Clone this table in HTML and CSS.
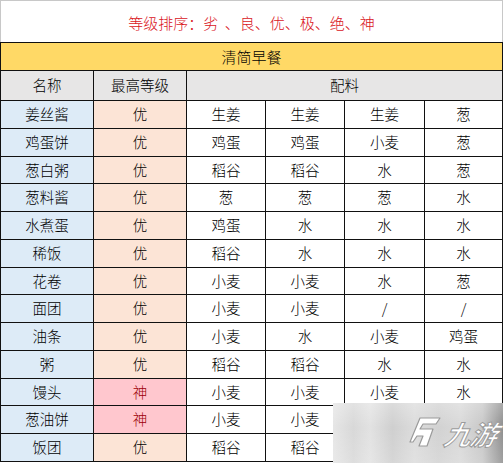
FILE: index.html
```html
<!DOCTYPE html>
<html lang="zh">
<head>
<meta charset="utf-8">
<title>清简早餐</title>
<link rel="stylesheet" href="styles.css">
</head>
<body>
<div class="page">
  <div class="legend">等级排序：劣&nbsp; 、良、优、极、绝、神</div>
  <div class="sheet">
    <div class="cell title span-all">清简早餐</div>
    <div class="cell head">名称</div>
    <div class="cell head">最高等级</div>
    <div class="cell head span-ing">配料</div>

    <div class="cell name">姜丝酱</div><div class="cell lv">优</div><div class="cell">生姜</div><div class="cell">生姜</div><div class="cell">生姜</div><div class="cell">葱</div>
    <div class="cell name">鸡蛋饼</div><div class="cell lv">优</div><div class="cell">鸡蛋</div><div class="cell">鸡蛋</div><div class="cell">小麦</div><div class="cell">葱</div>
    <div class="cell name">葱白粥</div><div class="cell lv">优</div><div class="cell">稻谷</div><div class="cell">稻谷</div><div class="cell">水</div><div class="cell">葱</div>
    <div class="cell name">葱料酱</div><div class="cell lv">优</div><div class="cell">葱</div><div class="cell">葱</div><div class="cell">葱</div><div class="cell">水</div>
    <div class="cell name">水煮蛋</div><div class="cell lv">优</div><div class="cell">鸡蛋</div><div class="cell">水</div><div class="cell">水</div><div class="cell">水</div>
    <div class="cell name">稀饭</div><div class="cell lv">优</div><div class="cell">稻谷</div><div class="cell">水</div><div class="cell">水</div><div class="cell">水</div>
    <div class="cell name">花卷</div><div class="cell lv">优</div><div class="cell">小麦</div><div class="cell">小麦</div><div class="cell">水</div><div class="cell">葱</div>
    <div class="cell name">面团</div><div class="cell lv">优</div><div class="cell">小麦</div><div class="cell">小麦</div><div class="cell">/</div><div class="cell">/</div>
    <div class="cell name">油条</div><div class="cell lv">优</div><div class="cell">小麦</div><div class="cell">水</div><div class="cell">小麦</div><div class="cell">鸡蛋</div>
    <div class="cell name">粥</div><div class="cell lv">优</div><div class="cell">稻谷</div><div class="cell">稻谷</div><div class="cell">水</div><div class="cell">水</div>
    <div class="cell name">馒头</div><div class="cell lv god">神</div><div class="cell">小麦</div><div class="cell">小麦</div><div class="cell">小麦</div><div class="cell">水</div>
    <div class="cell name">葱油饼</div><div class="cell lv god">神</div><div class="cell">小麦</div><div class="cell">小麦</div><div class="cell">葱</div><div class="cell">水</div>
    <div class="cell name">饭团</div><div class="cell lv">优</div><div class="cell">稻谷</div><div class="cell">稻谷</div><div class="cell">水</div><div class="cell">水</div>
  </div>
  <div class="watermark">
    <svg class="wm-logo" width="34" height="34" viewBox="0 0 34 34">
      <path d="M11 3 L31 3 L27 9 L14 9 L11 14 L24 14 L18 31 L10 31 L14 21 L8 21 L4 27 L1 27 Z" fill="#ffffff" stroke="#9a9a9a" stroke-width="1.2" stroke-linejoin="round"/>
    </svg>
    <span class="wm-text">九游</span>
  </div>
</div>
</body>
</html>
```
FILE: styles.css
```css
html, body {
  margin: 0;
  padding: 0;
  background: #ffffff;
}
.page {
  position: relative;
  width: 503px;
  height: 463px;
  overflow: hidden;
  font-family: "Noto Sans CJK SC", "Noto Sans", sans-serif;
  font-weight: 300;
}
.legend {
  box-sizing: border-box;
  height: 42px;
  border: 1px solid #c8c8c8;
  border-bottom: none;
  display: flex;
  align-items: center;
  justify-content: center;
  color: #d9141b;
  font-size: 15px;
  padding-top: 2px;
}
.sheet {
  display: grid;
  grid-template-columns: 93px 93px 79px 79px 80px 78px;
  grid-template-rows: 28px 30px 28px 28px 27px 28px 28px 28px 27px 28px 28px 28px 27px 28px 28px;
  border-left: 1px solid #111;
  border-top: 1px solid #111;
  width: 503px;
  box-sizing: border-box;
}
.cell {
  box-sizing: border-box;
  border-right: 1px solid #111;
  border-bottom: 1px solid #111;
  display: flex;
  align-items: center;
  justify-content: center;
  font-size: 14.5px;
  color: #000;
  background: #ffffff;
  line-height: 1;
}
.span-all { grid-column: 1 / 7; }
.span-ing { grid-column: 3 / 7; }
.title {
  background: #ffd966;
  font-size: 15px;
  color: #000;
}
.head { background: #e7e6e6; }
.name { background: #ddebf7; }
.lv { background: #fce4d6; }
.lv.god {
  background: #ffc7ce;
  color: #9c0006;
}
.watermark {
  position: absolute;
  left: 333px;
  top: 403px;
  width: 170px;
  height: 60px;
  background:
    linear-gradient(to bottom, rgba(255,255,255,0.25), rgba(255,255,255,0) 40%, rgba(255,255,255,0.15)),
    linear-gradient(to right, #e6e6e6 0%, #d8d8d8 12%, #e2e2e2 22%, #cfcfcf 35%, #dcdcdc 48%, #d2d2d2 62%, #d9d9d9 75%, #c8c8c8 88%, #8e8e8e 100%);
  display: flex;
  align-items: center;
  justify-content: flex-end;
  padding-right: 6px;
  box-sizing: border-box;
  gap: 2px;
}
.wm-logo {
  display: block;
  margin-bottom: 2px;
}
.wm-text {
  color: #ffffff;
  font-size: 27px;
  font-weight: 700;
  font-style: italic;
  transform: skewX(-12deg);
  -webkit-text-stroke: 1px #9a9a9a;
  line-height: 1;
  letter-spacing: -1px;
}
```
